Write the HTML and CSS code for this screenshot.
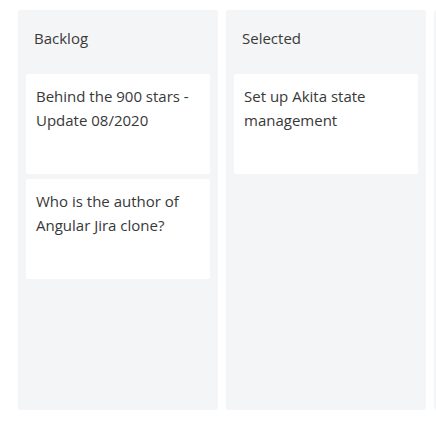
FILE: index.html
```html
<!DOCTYPE html>
<html lang="en">
<head>
<meta charset="utf-8">
<title>Board</title>
<link rel="stylesheet" href="styles.css">
</head>
<body>
<div class="board">
  <section class="column">
    <h2 class="column-title">Backlog</h2>
    <div class="cards">
      <div class="card">Behind the 900 stars - Update 08/2020</div>
      <div class="card">Who is the author of Angular Jira clone?</div>
    </div>
  </section>
  <section class="column">
    <h2 class="column-title">Selected</h2>
    <div class="cards">
      <div class="card">Set up Akita state management</div>
    </div>
  </section>
  <section class="column" aria-hidden="true"></section>
</div>
</body>
</html>
```

FILE: styles.css
```css
html, body {
  margin: 0;
  padding: 0;
  background: #ffffff;
  overflow: hidden;
}

body {
  font-family: "Open Sans", "Noto Sans", sans-serif;
  color: #383838;
}

.board {
  display: flex;
  gap: 8px;
  padding: 10px 0 0 18px;
}

.column {
  flex: 0 0 200px;
  height: 400px;
  background: #f4f5f7;
  border-radius: 3px;
}

.column-title {
  margin: 0;
  padding: 16px 16px 24px;
  font-size: 15px;
  font-weight: 400;
  line-height: 24px;
  color: #3a3a3a;
  white-space: nowrap;
}

.cards {
  display: flex;
  flex-direction: column;
  gap: 5px;
  padding: 0 8px;
}

.card {
  box-sizing: border-box;
  min-height: 100px;
  padding: 10px;
  background: #ffffff;
  border-radius: 2px;
  font-size: 15px;
  line-height: 24px;
  color: #383838;
}
```
